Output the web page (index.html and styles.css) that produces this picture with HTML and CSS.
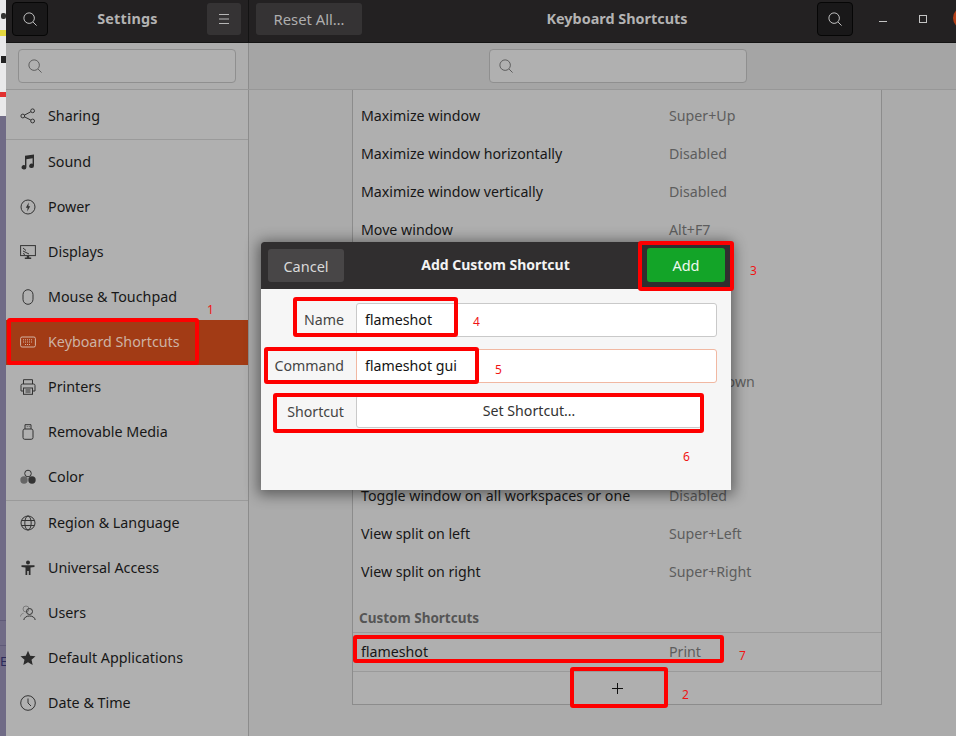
FILE: index.html
```html
<!DOCTYPE html>
<html lang="en">
<head>
<meta charset="utf-8">
<title>Keyboard Shortcuts</title>
<link rel="stylesheet" href="styles.css">
</head>
<body>
<div class="page">
  <div class="desktop">
    <div class="desk-light">
      <span class="desk-chevron"></span>
      <span class="desk-yellow"></span>
      <span class="desk-arrow"></span>
      <span class="desk-red"></span>
    </div>
    <div class="desk-dark"><span class="desk-line"></span><span class="desk-line"></span><span class="desk-e">E</span></div>
  </div>
  <div class="window">
    <header class="titlebar">
      <div class="tb-left">
        <button class="tb-btn tb-toggle"><svg class="ic-search" viewBox="0 0 16 16"><circle cx="7" cy="7" r="6"/><path d="M11.5 11.5 15.5 15.5"/></svg></button>
        <div class="tb-title tb-title-left">Settings</div>
        <button class="tb-btn tb-menu"><svg class="ic-menu" viewBox="0 0 10 10"><path d="M0 .5H10M0 5H10M0 9.5H10"/></svg></button>
      </div>
      <div class="tb-right">
        <button class="tb-btn tb-reset">Reset All…</button>
        <div class="tb-title tb-title-right">Keyboard Shortcuts</div>
        <button class="tb-btn tb-toggle tb-toggle-right"><svg class="ic-search" viewBox="0 0 16 16"><circle cx="7" cy="7" r="6"/><path d="M11.5 11.5 15.5 15.5"/></svg></button>
        <span class="wc-min"></span>
        <span class="wc-max"></span>
        <span class="wc-close"></span>
      </div>
    </header>
    <div class="searchrow">
      <div class="sr-left">
        <div class="entry entry-left"><svg class="ic-search ic-search-dim" viewBox="0 0 16 16"><circle cx="7" cy="7" r="6"/><path d="M11.5 11.5 15.5 15.5"/></svg></div>
      </div>
      <div class="sr-right">
        <div class="entry entry-right"><svg class="ic-search ic-search-dim" viewBox="0 0 16 16"><circle cx="7" cy="7" r="6"/><path d="M11.5 11.5 15.5 15.5"/></svg></div>
      </div>
    </div>
    <div class="content">
      <nav class="sidebar">
        <div class="nav-row nav-rule">
          <svg class="ic" viewBox="0 0 16 16"><circle cx="2.8" cy="8" r="1.9"/><circle cx="12.6" cy="2.8" r="1.9"/><circle cx="12.6" cy="13" r="1.9"/><path d="M4.5 7.1 10.900 3.700M4.500 8.900 10.900 12.100"/></svg>
          <span>Sharing</span>
        </div>
        <div class="nav-row">
          <svg class="ic ic-fill" viewBox="0 0 16 16"><path d="M5 1.800 14 .5V11.800A2.400 2.200 0 1 1 12.600 9.800V4.200L6.400 5.200V13.200A2.400 2.200 0 1 1 5 11.200Z"/></svg>
          <span>Sound</span>
        </div>
        <div class="nav-row">
          <svg class="ic" viewBox="0 0 16 16"><circle cx="8" cy="8" r="7"/><path class="solid" d="M8.800 3.600 5.800 8.800H7.600L7.200 12.400 10.200 7.200H8.400Z"/></svg>
          <span>Power</span>
        </div>
        <div class="nav-row">
          <svg class="ic" viewBox="0 0 16 16"><rect x=".6" y="1.600" width="14.800" height="10"/><path d="M3 4 6 6.500M3 7 9 10M3 9.500 5 10.500"/><path class="solid" d="M6.800 12h2.400v1.500h2V15H4.800v-1.500h2Z"/></svg>
          <span>Displays</span>
        </div>
        <div class="nav-row">
          <svg class="ic" viewBox="0 0 16 16"><rect x="3" y=".7" width="10" height="14.600" rx="5"/></svg>
          <span>Mouse &amp; Touchpad</span>
        </div>
        <div class="nav-row nav-active">
          <svg class="ic ic-active" viewBox="0 0 16 16"><rect x=".6" y="3" width="14.800" height="10" rx="1.500"/><path d="M3 5.800H13M3 8H13M5 10.500H11" stroke-dasharray="1 1"/></svg>
          <span>Keyboard Shortcuts</span>
        </div>
        <div class="nav-row">
          <svg class="ic" viewBox="0 0 16 16"><path d="M3.500 5V.7H12.500V5M3.500 12H1V6.500A1.500 1.500 0 0 1 2.500 5H13.500A1.500 1.500 0 0 1 15 6.500V12H12.500"/><rect x="3.500" y="9" width="9" height="6.300"/><path d="M5.500 11H10.500M5.500 13H10.500"/></svg>
          <span>Printers</span>
        </div>
        <div class="nav-row">
          <svg class="ic" viewBox="0 0 16 16"><rect x="3" y="5" width="10" height="10.300" rx="1.800"/><path d="M5 5V.7H11V5M6.800 2.600H7.500M8.800 2.600H9.500"/></svg>
          <span>Removable Media</span>
        </div>
        <div class="nav-row nav-rule">
          <svg class="ic" viewBox="0 0 16 16"><circle cx="8" cy="4.500" r="3.300"/><circle class="solid-grey" cx="4" cy="11" r="3.700"/><circle class="solid" cx="12" cy="11" r="3.700"/></svg>
          <span>Color</span>
        </div>
        <div class="nav-row">
          <svg class="ic" viewBox="0 0 16 16"><circle cx="8" cy="8" r="7"/><ellipse cx="8" cy="8" rx="3.200" ry="7"/><path d="M1.500 5.500H14.500M1.500 10.500H14.500"/></svg>
          <span>Region &amp; Language</span>
        </div>
        <div class="nav-row">
          <svg class="ic ic-fill" viewBox="0 0 16 16"><circle cx="8" cy="2.500" r="2"/><path d="M1.500 5.200H14.500V7L10.500 7.500V15H8.800V11H7.200V15H5.500V7.500L1.500 7Z"/></svg>
          <span>Universal Access</span>
        </div>
        <div class="nav-row">
          <svg class="ic" viewBox="0 0 16 16"><g class="ghost"><circle cx="6" cy="4" r="3"/><path d="M.5 11.500C.8 9.500 2 8.600 3.500 8.300"/></g><circle cx="9.500" cy="6.500" r="3"/><path d="M3.800 15C4.200 12.300 6.500 11 9.500 11S14.800 12.300 15.200 15"/></svg>
          <span>Users</span>
        </div>
        <div class="nav-row">
          <svg class="ic ic-fill" viewBox="0 0 16 16"><path d="M8 .8 10.200 5.700 15.500 6.200 11.500 9.700 12.700 15 8 12.200 3.300 15 4.500 9.700 .5 6.200 5.800 5.700Z"/></svg>
          <span>Default Applications</span>
        </div>
        <div class="nav-row">
          <svg class="ic" viewBox="0 0 16 16"><circle cx="8" cy="8" r="7.300"/><path d="M8 3.500V8L11 11"/></svg>
          <span>Date &amp; Time</span>
        </div>
      </nav>
      <main class="main">
        <section class="list">
          <div class="row"><span class="name">Maximize window</span><span class="val">Super+Up</span></div>
          <div class="row"><span class="name">Maximize window horizontally</span><span class="val">Disabled</span></div>
          <div class="row"><span class="name">Maximize window vertically</span><span class="val">Disabled</span></div>
          <div class="row"><span class="name">Move window</span><span class="val">Alt+F7</span></div>
          <div class="row"></div>
          <div class="row"></div>
          <div class="row"></div>
          <div class="row"><span class="name"></span><span class="val">Super+Down</span></div>
          <div class="row"></div>
          <div class="row"></div>
          <div class="row"><span class="name">Toggle window on all workspaces or one</span><span class="val">Disabled</span></div>
          <div class="row"><span class="name">View split on left</span><span class="val">Super+Left</span></div>
          <div class="row"><span class="name">View split on right</span><span class="val">Super+Right</span></div>
          <div class="list-head">Custom Shortcuts</div>
          <div class="row row-rule"><span class="name">flameshot</span><span class="val">Print</span></div>
          <div class="add-row"><svg class="ic-plus" viewBox="0 0 11 11"><path d="M5.500 0V11M0 5.500H11"/></svg></div>
        </section>
      </main>
    </div>
  </div>

  <div class="dialog">
    <div class="dlg-head">
      <button class="dlg-cancel">Cancel</button>
      <div class="dlg-title">Add Custom Shortcut</div>
      <button class="dlg-add">Add</button>
    </div>
    <div class="dlg-body">
      <div class="field">
        <label class="field-label">Name</label>
        <div class="field-input">flameshot</div>
      </div>
      <div class="field">
        <label class="field-label">Command</label>
        <div class="field-input field-focus">flameshot gui</div>
      </div>
      <div class="field">
        <label class="field-label">Shortcut</label>
        <div class="field-button">Set Shortcut…</div>
      </div>
    </div>
  </div>

  <span class="mark mark-1"></span><span class="num num-1">1</span>
  <span class="mark mark-2"></span><span class="num num-2">2</span>
  <span class="mark mark-3"></span><span class="num num-3">3</span>
  <span class="mark mark-4"></span><span class="num num-4">4</span>
  <span class="mark mark-5"></span><span class="num num-5">5</span>
  <span class="mark mark-6"></span><span class="num num-6">6</span>
  <span class="mark mark-7"></span><span class="num num-7">7</span>
</div>
</body>
</html>
```

FILE: styles.css
```css
* { box-sizing: border-box; }
html, body { margin: 0; padding: 0; background: #ababab; }
body { font-family: "Noto Sans", "Liberation Sans", sans-serif; font-size: 14px; color: #171717; }
button { font: inherit; border: 0; padding: 0; }
.page { position: relative; display: flex; width: 956px; height: 736px; overflow: hidden; }

/* desktop sliver on the left */
.desktop { flex: 0 0 6px; display: flex; flex-direction: column; overflow: hidden; }
.desk-light { flex: 0 0 116px; background: #e9e9ea; display: flex; flex-direction: column; }
.desk-chevron { height: 6px; margin-top: 13px; background: #333; width: 5px; margin-left: 1px; border-radius: 2px; }
.desk-yellow { height: 6px; margin-top: 11px; background: #e3d73f; }
.desk-arrow { height: 7px; margin-top: 20px; width: 5px; margin-left: 1px; background: #222; }
.desk-red { height: 5px; margin-top: 29px; background: #e23030; }
.desk-dark { flex: 1; background: #706b86; padding-top: 504px; display: flex; flex-direction: column; gap: 24px; color: #2b2a5a; }
.desk-line { height: 1px; background: #5f5a78; }
.desk-e { font-size: 13px; line-height: 10px; margin-top: -14px; }

.window { flex: 0 0 950px; display: flex; flex-direction: column; }

/* header bar */
.titlebar { flex: 0 0 43px; display: flex; background: #232122; border-bottom: 1px solid #141414; color: #b3b3b3; }
.tb-left { flex: 0 0 243px; display: flex; align-items: flex-start; padding: 2px 7px 0 6px; border-right: 1px solid #131313; }
.tb-right { flex: 1; min-width: 0; display: flex; align-items: flex-start; padding: 3px 0 0 7px; }
.tb-btn { background: #353334; color: #aeaeae; border-radius: 3px; height: 32px; display: flex; align-items: center; justify-content: center; }
.tb-toggle { flex: 0 0 36px; height: 34px; background: #191819; border: 1px solid #060606; border-radius: 4px; }
.tb-toggle-right { margin-top: -1px; }
.tb-menu { flex: 0 0 34px; margin-top: 1px; }
.tb-reset { flex: 0 0 106px; font-size: 14.800px; }
.tb-title { font-weight: 700; font-size: 14.400px; line-height: 34px; text-align: center; white-space: nowrap; }
.tb-title-left { flex: 1; letter-spacing: .2px; }
.tb-title-right { flex: 0 0 455px; padding-left: 55px; margin-top: -1px; }
.wc-min { flex: 0 0 8px; height: 1px; margin: 18px 0 0 26px; background: #c4c4c4; }
.wc-max { flex: 0 0 8px; height: 8px; margin: 12px 0 0 32px; border: 1px solid #c4c4c4; }
.wc-close { flex: 0 0 22px; height: 22px; margin: 4px 0 0 26px; border-radius: 50%; background: #b23f17; }

.ic-search { width: 14px; height: 14px; fill: none; stroke: #c9c9c9; stroke-width: 1.100; display: block; }
.ic-search-dim { stroke: #5a5a5a; }
.ic-menu { width: 10px; height: 10px; fill: none; stroke: #b6b6b6; stroke-width: 1; display: block; }

/* search row */
.searchrow { flex: 0 0 47px; display: flex; border-bottom: 1px solid #979797; }
.sr-left { flex: 0 0 243px; background: #adadad; padding: 6px 12px 0; border-right: 1px solid #8c8c8c; }
.sr-right { flex: 1; background: #a5a5a5; padding: 6px 0 0 240px; }
.entry { height: 34px; background: #b0b0b0; border: 1px solid #8f8f8f; border-radius: 4px; display: flex; align-items: center; padding-left: 9px; }
.entry-left { width: 218px; }
.entry-right { width: 258px; }

/* content */
.content { flex: 1; min-height: 0; display: flex; }
.sidebar { flex: 0 0 243px; background: #b0b0b0; border-right: 1px solid #8c8c8c; overflow: hidden; padding-top: 4px; }
.nav-row { height: 45px; display: flex; align-items: center; gap: 12px; padding-left: 14px; font-size: 14.300px; }
.nav-row span { margin-bottom: 2px; }
.nav-rule { height: 46px; border-bottom: 1px solid #9a9a9a; }
.nav-active { background: #a23b15; color: #cdb2a4; }
.ic { flex: 0 0 16px; width: 16px; height: 16px; margin-bottom: 2px; fill: none; stroke: #333; stroke-width: 1; }
.ic .solid { fill: #333; stroke: none; }
.ic .solid-grey { fill: #666; stroke: none; }
.ic .ghost { stroke: #7a7a7a; }
.ic-fill { fill: #2c2c2c; stroke: none; }
.ic-active { stroke: #d4b5a5; }

.main { flex: 1; min-width: 0; background: #ababab; padding-left: 103px; overflow: hidden; }
.list { width: 530px; height: 615px; background: #afafaf; border: 1px solid #8c8c8c; border-top: 0; padding-top: 6px; }
.row { height: 38px; display: flex; align-items: center; padding-left: 8px; font-size: 14.200px; }
.name { flex: 0 0 308px; white-space: nowrap; }
.val { color: #5d5d5d; white-space: nowrap; }
.list-head { height: 43px; padding: 19px 0 0 6px; font-weight: 700; font-size: 13.500px; line-height: 18px; color: #555; border-bottom: 1px solid #9a9a9a; }
.row-rule { border-bottom: 1px solid #9a9a9a; height: 39px; padding-bottom: 2px; }
.add-row { height: 33px; display: flex; align-items: center; justify-content: center; }
.ic-plus { width: 11px; height: 11px; fill: none; stroke: #111; stroke-width: 1; }

/* dialog */
.dialog { position: absolute; left: 261px; top: 242px; width: 470px; height: 248px; background: #f6f6f6; box-shadow: 0 2px 14px 3px rgba(0,0,0,.45); border-radius: 3px 3px 0 0; display: flex; flex-direction: column; }
.dlg-head { flex: 0 0 47px; background: #302e2f; display: flex; align-items: flex-start; padding: 6px 6px 0 7px; border-radius: 3px 3px 0 0; }
.dlg-cancel { flex: 0 0 76px; height: 33px; margin-top: 1px; background: #484647; color: #d9d9d9; border-radius: 3px; font-size: 14.500px; }
.dlg-title { flex: 1; text-align: center; color: #f3f3f3; font-weight: 700; font-size: 14px; line-height: 34px; }
.dlg-add { flex: 0 0 78px; height: 34px; background: #13a428; color: #eef8ee; border-radius: 3px; font-size: 14.500px; }
.dlg-body { flex: 1; display: flex; flex-direction: column; gap: 13px; padding-top: 14px; }
.field { display: flex; align-items: center; height: 33px; gap: 12px; font-size: 14.200px; }
.field-label { flex: 0 0 83px; text-align: right; color: #454545; }
.field-input { flex: 0 0 361px; height: 34px; background: #fff; border: 1px solid #c9c9c9; border-radius: 3px; padding-left: 8px; line-height: 31px; color: #141414; }
.field-focus { border-color: #f1b8a2; }
.field-button { flex: 0 0 346px; height: 33px; background: #fff; border: 1px solid #c9c9c9; border-radius: 3px; text-align: center; line-height: 30px; color: #333; }

/* red annotations over the screenshot */
.mark { position: absolute; border: 4px solid #fe0000; border-radius: 3px; }
.num { position: absolute; color: #f01414; font-size: 12px; line-height: 14px; }
.mark-1 { left: 7px; top: 318px; width: 192px; height: 47px; }
.mark-2 { left: 570px; top: 667px; width: 98px; height: 41px; }
.mark-3 { left: 638px; top: 241px; width: 96px; height: 50px; }
.mark-4 { left: 293px; top: 297px; width: 165px; height: 40px; }
.mark-5 { left: 264px; top: 347px; width: 215px; height: 37px; }
.mark-6 { left: 273px; top: 393px; width: 431px; height: 40px; }
.mark-7 { left: 353px; top: 635px; width: 371px; height: 28px; }
.num-1 { left: 207px; top: 303px; }
.num-2 { left: 682px; top: 688px; }
.num-3 { left: 750px; top: 264px; }
.num-4 { left: 473px; top: 315px; }
.num-5 { left: 495px; top: 363px; }
.num-6 { left: 683px; top: 450px; }
.num-7 { left: 739px; top: 649px; }
```
